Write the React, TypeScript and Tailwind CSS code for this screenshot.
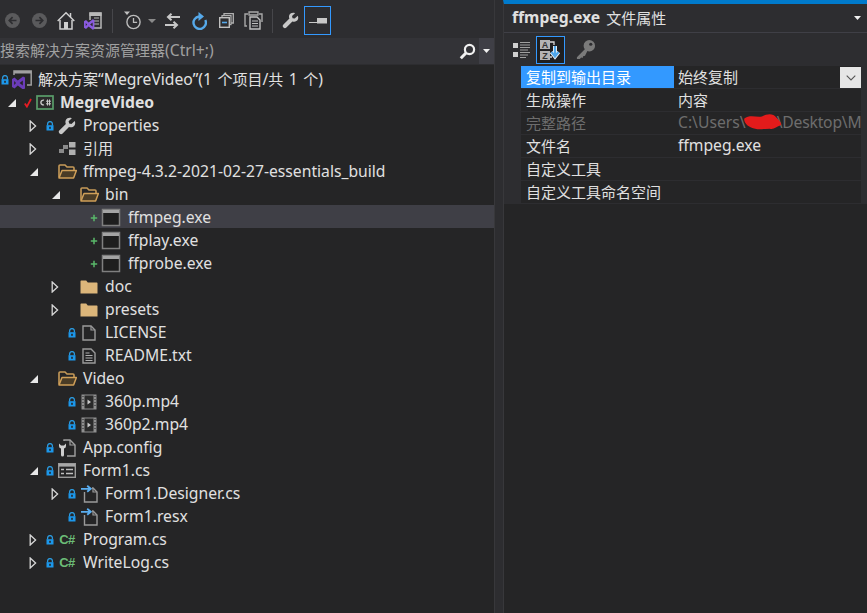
import React from "react";

const Lock = () => (
  <svg width="8" height="10" viewBox="0 0 8 10" className="block">
    <path d="M1.6 4.5V3a2.4 2.4 0 0 1 4.8 0v1.5" fill="none" stroke="#2b9be0" strokeWidth="1.3" />
    <rect x="0.5" y="4.2" width="7" height="5.3" fill="#1c97ea" />
    <rect x="3.2" y="5.8" width="1.6" height="2" fill="#252526" />
  </svg>
);

const Plus = () => (
  <svg width="8" height="8" viewBox="0 0 8 8" className="block">
    <path d="M4 .8v6.4M.8 4h6.4" stroke="#59b86a" strokeWidth="1.5" />
  </svg>
);

const Check = () => (
  <svg width="8" height="10" viewBox="0 0 8 10" className="block">
    <path d="M.8 5.5 2.9 8.6 7 1" fill="none" stroke="#e51c23" strokeWidth="1.8" />
  </svg>
);

const Open = () => (
  <svg width="10" height="10" viewBox="0 0 10 10" className="ml-[2px] block">
    <path d="M9 1v8H1z" fill="#e8e8e8" />
  </svg>
);

const Closed = () => (
  <svg width="8" height="12" viewBox="0 0 8 12" className="block">
    <path d="M1.2 1v10L6.6 6z" fill="#252526" stroke="#d8d8d8" strokeWidth="1.3" />
  </svg>
);

const Wrench = ({ size = 18, c = "#c8c8c8" }: { size?: number; c?: string }) => (
  <svg width={size} height={size} viewBox="0 0 19 19" className="block">
    <path
      d="M17.6 4.2 14.2 7.4 11.8 6.9 11.2 4.6 14.6 1.3C12.2.3 9.4 1 8.3 3.2 7.6 4.6 7.7 6.1 8.3 7.3L1.6 14a2.3 2.3 0 0 0 3.3 3.3l6.7-6.8c2.3 1 5 .2 6.1-2 .6-1.3.6-3 -.1-4.3z"
      fill={c}
    />
  </svg>
);

const FolderOpen = () => (
  <svg width="19" height="15" viewBox="0 0 19 15" className="block">
    <path d="M1 13.5V2a1 1 0 0 1 1-1h5l2 2h6a1 1 0 0 1 1 1v2" fill="none" stroke="#c69a58" strokeWidth="1.6" />
    <path d="M1 14 4 6.5h14.4L15.6 14z" fill="#4a3c26" stroke="#cf9f58" strokeWidth="1.5" strokeLinejoin="round" />
  </svg>
);

const FolderClosed = () => (
  <svg width="18" height="14" viewBox="0 0 18 14" className="block">
    <path d="M.5 13.5V1.2A.7.7 0 0 1 1.2.5h5l1.6 2h9a.7.7 0 0 1 .7.7v10.3z" fill="#dcb67a" />
  </svg>
);

const Exe = () => (
  <svg width="20" height="19" viewBox="0 0 20 19" className="block">
    <rect x="1.5" y="1.5" width="17" height="16" fill="#1e1e1e" stroke="#7f7f7f" strokeWidth="1.5" />
    <rect x="2" y="2" width="16" height="3" fill="#a4a4a4" />
  </svg>
);

const FileBlank = () => (
  <svg width="14" height="16" viewBox="0 0 14 16" className="block">
    <path d="M1 1h8l4 4v10H1z" fill="none" stroke="#9a9a9a" strokeWidth="1.4" />
    <path d="M9 1v4h4" fill="none" stroke="#9a9a9a" strokeWidth="1.2" />
  </svg>
);

const FileText = () => (
  <svg width="14" height="16" viewBox="0 0 14 16" className="block">
    <path d="M1 1h8l4 4v10H1z" fill="none" stroke="#9a9a9a" strokeWidth="1.4" />
    <path d="M3.5 5h4M3.5 7.5h7M3.5 10h7M3.5 12.5h7" stroke="#b0b0b0" strokeWidth="1.1" />
  </svg>
);

const Film = () => (
  <svg width="16" height="16" viewBox="0 0 16 16" className="block">
    <rect x=".5" y=".5" width="15" height="15" fill="#8f8f8f" />
    <rect x="3.5" y="1.5" width="9" height="13" fill="#2a2a2a" />
    <path d="M1.5 2.5h1M1.5 5.5h1M1.5 8.5h1M1.5 11.5h1M13.5 2.5h1M13.5 5.5h1M13.5 8.5h1M13.5 11.5h1" stroke="#252526" strokeWidth="1.2" />
    <path d="M6.5 5.5v5L10 8z" fill="#c8c8c8" />
  </svg>
);

const Config = () => (
  <svg width="18" height="18" viewBox="0 0 18 18" className="block">
    <path d="M6 2V1h6l5 5v11H9" fill="none" stroke="#a0a0a0" strokeWidth="1.4" />
    <path d="M12 1v5h5" fill="none" stroke="#a0a0a0" strokeWidth="1.2" />
    <path d="M1 4.5V7a2.6 2.6 0 0 0 2 2.5V16a1.5 1.5 0 0 0 3 0V9.5A2.6 2.6 0 0 0 8 7V4.5L6 6.5H3z" fill="#d0d0d0" />
  </svg>
);

const FormIcon = () => (
  <svg width="18" height="15" viewBox="0 0 18 15" className="block">
    <rect x=".7" y=".7" width="16.6" height="13.6" fill="#252526" stroke="#9a9a9a" strokeWidth="1.4" />
    <rect x="1" y="1" width="16" height="2.6" fill="#a8a8a8" />
    <path d="M3 6.5h3M8 6.5h7M3 10.5h3M8 10.5h7" stroke="#c0c0c0" strokeWidth="1.6" />
  </svg>
);

const Dep = () => (
  <svg width="17" height="18" viewBox="0 0 17 18" className="block">
    <path d="M3.5 7V17h12.5V7l-4-4h-1" fill="none" stroke="#9a9a9a" strokeWidth="1.4" />
    <path d="M12 3v4h4" fill="none" stroke="#9a9a9a" strokeWidth="1.2" />
    <path d="M0 3.8h9.5M6.2.8l3.6 3-3.6 3" fill="none" stroke="#5aaef0" strokeWidth="1.8" />
  </svg>
);

const CSharp = () => (
  <span className="font-['Liberation_Sans',sans-serif] text-[13px] leading-none font-bold tracking-[-0.5px] text-[#6cbd77]">
    C#
  </span>
);

const Project = () => (
  <svg width="18" height="15" viewBox="0 0 18 15" className="block">
    <rect x="1" y="1" width="16" height="13" fill="#2b2b2b" stroke="#5a9e6a" strokeWidth="1.7" />
    <path d="M8 5.2a2.4 2.4 0 1 0 0 4.6" fill="none" stroke="#c8c8c8" strokeWidth="1.4" />
    <path d="M10 6.2h5M10 8.8h5M11.5 4.5v6M13.5 4.5v6" stroke="#c8c8c8" strokeWidth="1" />
  </svg>
);

const Refs = () => (
  <svg width="17" height="13" viewBox="0 0 17 13" className="block">
    <rect x="10" y="0" width="6.5" height="5.5" fill="#b0b0b0" />
    <rect x="10" y="7.5" width="6.5" height="5.5" fill="#b0b0b0" />
    <rect x="4" y="3" width="5" height="4" fill="#8a8a8a" />
    <rect x="0" y="7" width="5" height="4" fill="#8a8a8a" />
  </svg>
);

const VsMark = ({ c = "#7a4ed1" }: { c?: string }) => (
  <path d="M0 3.5 2.5 2l3.3 3L11 1l2 1v11l-2 1-5.2-4-3.3 3L0 11.5zM2.2 5.5v4L4 7.5zM7.6 7.5 10.8 10V5z" fill={c} fillRule="evenodd" />
);

const Solution = () => (
  <svg width="20" height="19" viewBox="0 0 20 19" className="block">
    <path d="M2 5V1h17.2v14H15" fill="none" stroke="#a0a0a0" strokeWidth="1.5" />
    <path d="M2 1h17.2v2.5H2z" fill="#a0a0a0" />
    <g transform="translate(0 5.5)">
      <VsMark c="#6a3cb8" />
    </g>
  </svg>
);

type Row = {
  label: string;
  depth: string;
  gap: string;
  arrow?: "open" | "closed";
  state?: "lock" | "plus" | "check";
  icon: React.ReactNode;
  bold?: boolean;
  active?: boolean;
  zh?: boolean;
};

const rows: Row[] = [
  { label: "MegreVideo", depth: "pl-0", gap: "ml-[5px]", arrow: "open", state: "check", icon: <Project />, bold: true },
  { label: "Properties", depth: "pl-[22px]", gap: "ml-[6px]", arrow: "closed", state: "lock", icon: <Wrench /> },
  { label: "引用", depth: "pl-[22px]", gap: "ml-[6px]", arrow: "closed", icon: <Refs />, zh: true },
  { label: "ffmpeg-4.3.2-2021-02-27-essentials_build", depth: "pl-[22px]", gap: "ml-[6px]", arrow: "open", icon: <FolderOpen /> },
  { label: "bin", depth: "pl-[44px]", gap: "ml-[6px]", arrow: "open", icon: <FolderOpen /> },
  { label: "ffmpeg.exe", depth: "pl-[66px]", gap: "ml-[7px]", state: "plus", icon: <Exe />, active: true },
  { label: "ffplay.exe", depth: "pl-[66px]", gap: "ml-[7px]", state: "plus", icon: <Exe /> },
  { label: "ffprobe.exe", depth: "pl-[66px]", gap: "ml-[7px]", state: "plus", icon: <Exe /> },
  { label: "doc", depth: "pl-[44px]", gap: "ml-[6px]", arrow: "closed", icon: <FolderClosed /> },
  { label: "presets", depth: "pl-[44px]", gap: "ml-[6px]", arrow: "closed", icon: <FolderClosed /> },
  { label: "LICENSE", depth: "pl-[44px]", gap: "ml-[6px]", state: "lock", icon: <FileBlank /> },
  { label: "README.txt", depth: "pl-[44px]", gap: "ml-[6px]", state: "lock", icon: <FileText /> },
  { label: "Video", depth: "pl-[22px]", gap: "ml-[6px]", arrow: "open", icon: <FolderOpen /> },
  { label: "360p.mp4", depth: "pl-[44px]", gap: "ml-[6px]", state: "lock", icon: <Film /> },
  { label: "360p2.mp4", depth: "pl-[44px]", gap: "ml-[6px]", state: "lock", icon: <Film /> },
  { label: "App.config", depth: "pl-[22px]", gap: "ml-[6px]", state: "lock", icon: <Config /> },
  { label: "Form1.cs", depth: "pl-[22px]", gap: "ml-[6px]", arrow: "open", state: "lock", icon: <FormIcon /> },
  { label: "Form1.Designer.cs", depth: "pl-[44px]", gap: "ml-[6px]", arrow: "closed", state: "lock", icon: <Dep /> },
  { label: "Form1.resx", depth: "pl-[44px]", gap: "ml-[6px]", state: "lock", icon: <Dep /> },
  { label: "Program.cs", depth: "pl-[22px]", gap: "ml-[6px]", arrow: "closed", state: "lock", icon: <CSharp /> },
  { label: "WriteLog.cs", depth: "pl-[22px]", gap: "ml-[6px]", arrow: "closed", state: "lock", icon: <CSharp /> },
];

function TreeRow({ r }: { r: Row }) {
  return (
    <div className={`flex h-[23px] items-center pt-[2px] ${r.depth} ${r.active ? "bg-[#3f3f46]" : ""}`}>
      <span className="flex h-full w-[22px] shrink-0 items-center justify-center">
        {r.arrow === "open" ? <Open /> : r.arrow === "closed" ? <Closed /> : null}
      </span>
      <span className="flex h-full w-[13px] shrink-0 items-center justify-start pl-[2px]">
        {r.state === "lock" ? <Lock /> : r.state === "plus" ? <Plus /> : r.state === "check" ? <Check /> : null}
      </span>
      <span className="flex h-full w-[20px] shrink-0 items-center justify-center">{r.icon}</span>
      <span className={`whitespace-nowrap ${r.gap} ${r.bold ? "font-bold" : ""} ${r.zh ? "text-[15px]" : ""}`}>{r.label}</span>
    </div>
  );
}

const Zh = ({ children }: { children: React.ReactNode }) => <span className="text-[15px]">{children}</span>;

const props = [
  { k: "复制到输出目录", v: "始终复制", selected: true },
  { k: "生成操作", v: "内容" },
  { k: "完整路径", v: "C:\\Users\\", dim: true },
  { k: "文件名", v: "ffmpeg.exe" },
  { k: "自定义工具", v: "" },
  { k: "自定义工具命名空间", v: "" },
];

function ToolbarIcons() {
  return (
    <div className="flex h-[38px] shrink-0 items-center bg-[#2d2d30] pt-[3px] pl-[5px]">
      <svg width="15" height="15" viewBox="0 0 15 15" className="mr-[12px] block">
        <circle cx="7.5" cy="7.5" r="7.5" fill="#5a5a5c" />
        <path d="M11.5 7.5H5M7.6 4.2 4.3 7.5l3.3 3.3" fill="none" stroke="#2d2d30" strokeWidth="1.7" />
      </svg>
      <svg width="15" height="15" viewBox="0 0 15 15" className="mr-[10px] block">
        <circle cx="7.5" cy="7.5" r="7.5" fill="#5a5a5c" />
        <path d="M3.5 7.5H10M7.4 4.2l3.3 3.3-3.3 3.3" fill="none" stroke="#2d2d30" strokeWidth="1.7" />
      </svg>
      <svg width="18" height="19" viewBox="0 0 18 19" className="mr-[9px] block">
        <path d="M.7 10 9 1.8 17.3 10" fill="none" stroke="#d0d0d0" strokeWidth="1.5" />
        <path d="M13.5 2v4" stroke="#d0d0d0" strokeWidth="1.5" />
        <path d="M3 9v9h12V9" fill="none" stroke="#d0d0d0" strokeWidth="1.5" />
        <rect x="7" y="11" width="4" height="7" fill="#d0d0d0" />
      </svg>
      <svg width="18" height="18" viewBox="0 0 18 18" className="mr-[10px] block">
        <path d="M6 8V1h11v15H9" fill="#2d2d30" stroke="#b8b8b8" strokeWidth="1.5" />
        <path d="M6 1h11v2.5H6zM10 6h5M10 9h5M10 12h5" fill="#b8b8b8" stroke="#b8b8b8" strokeWidth="1.1" />
        <g transform="translate(0 6.5) scale(.8)">
          <VsMark c="#8a5ae0" />
        </g>
      </svg>
      <span className="mr-[11px] h-[24px] w-px bg-[#46464a]" />
      <svg width="18" height="19" viewBox="0 0 18 19" className="mr-[6px] block">
        <path d="M0 .5h6L3 4z" fill="#c0c0c0" />
        <circle cx="9.5" cy="11" r="6.6" fill="none" stroke="#bcbcbc" strokeWidth="1.4" />
        <path d="M9.5 7v4.3h3.6" fill="none" stroke="#bcbcbc" strokeWidth="1.3" />
      </svg>
      <svg width="8" height="4" viewBox="0 0 8 4" className="mr-[9px] block">
        <path d="M0 0h8L4 4z" fill="#8a8a8a" />
      </svg>
      <svg width="15" height="16" viewBox="0 0 15 16" className="mr-[12px] block">
        <path d="M15 4H3M6.5 .8 3 4l3.5 3.2M0 12h12M8.5 8.8 12 12l-3.5 3.2" fill="none" stroke="#c8c8c8" strokeWidth="2" />
      </svg>
      <svg width="15" height="18" viewBox="0 0 15 18" className="mr-[12px] block">
        <path d="M7 4.5A6.2 6.2 0 1 0 13.3 8" fill="none" stroke="#56a9ea" strokeWidth="2.4" />
        <path d="M6.5 0v9L12 4.5z" fill="#56a9ea" />
      </svg>
      <svg width="15" height="15" viewBox="0 0 15 15" className="mr-[10px] block">
        <path d="M5 3V.7h9.3V10H12" fill="none" stroke="#b0b0b0" strokeWidth="1.3" />
        <rect x="3" y="2.6" width="9" height="9" fill="#2d2d30" stroke="#b0b0b0" strokeWidth="1.2" />
        <rect x=".7" y="4.7" width="9.6" height="9.6" fill="#2d2d30" stroke="#c0c0c0" strokeWidth="1.4" />
        <path d="M3 9.5h5" stroke="#56a9ea" strokeWidth="1.6" />
      </svg>
      <svg width="19" height="19" viewBox="0 0 19 19" className="mr-[9px] block">
        <path d="M3 15H1V3h3M15 3h3v8" fill="none" stroke="#a8a8a8" strokeWidth="1.4" />
        <path d="M5 1h9v3H5z" fill="none" stroke="#a8a8a8" strokeWidth="1.3" />
        <path d="M6 6h7l3 3v9H6z" fill="#2d2d30" stroke="#c0c0c0" strokeWidth="1.4" />
        <path d="M8 10h6M8 12.5h6M8 15h6" stroke="#c0c0c0" strokeWidth="1.2" />
      </svg>
      <span className="mr-[9px] h-[24px] w-px bg-[#46464a]" />
      <span className="mr-[5px] block">
        <Wrench size={17} />
      </span>
      <span className="flex h-[29px] w-[27px] items-center justify-center border border-[#3399ff]">
        <svg width="18" height="6" viewBox="0 0 18 6" className="block">
          <path d="M0 4.5h8" stroke="#c8c8c8" strokeWidth="1" />
          <rect x="8" y="0" width="10" height="5.5" fill="#c8c8c8" />
        </svg>
      </span>
    </div>
  );
}

export default function App() {
  return (
    <div className="flex h-[613px] w-[867px] overflow-hidden bg-[#2d2d30] font-['Noto_Sans','Noto_Sans_CJK_SC',sans-serif] text-[15.7px] text-[#e0e0e0]">
      <div className="flex w-[495px] shrink-0 flex-col border-r border-[#38383b] bg-[#252526]">
        <ToolbarIcons />
        <div className="flex h-[27px] shrink-0 items-center justify-between border-b border-[#2d2d30] bg-[#333337] text-[#a0a0a0]">
          <span className="whitespace-nowrap">
            <Zh>搜索解决方案资源管理器</Zh>(Ctrl+;)
          </span>
          <span className="flex h-full items-center">
            <svg width="17" height="17" viewBox="0 0 17 17" className="mr-[3px] block">
              <circle cx="10.5" cy="6.5" r="4.6" fill="none" stroke="#f0f0f0" strokeWidth="2.2" />
              <path d="M7 10 1.8 15.2" stroke="#f0f0f0" strokeWidth="3" />
            </svg>
            <span className="flex h-full w-[15px] items-center justify-center bg-[#3f3f46]">
              <svg width="7" height="4" viewBox="0 0 7 4" className="block">
                <path d="M0 0h7L3.5 4z" fill="#f0f0f0" />
              </svg>
            </span>
          </span>
        </div>
        <div className="flex h-[2px] shrink-0" />
        <div className="flex h-[23px] items-center pt-[2px]">
          <span className="flex h-full w-[12px] shrink-0 items-center pl-px">
            <Lock />
          </span>
          <span className="flex h-full w-[22px] shrink-0 items-center">
            <Solution />
          </span>
          <span className="ml-[4px] whitespace-nowrap [word-spacing:1.4px]">
            <Zh>解决方案</Zh>“MegreVideo”(1 <Zh>个项目</Zh>/<Zh>共</Zh> 1 <Zh>个</Zh>)
          </span>
        </div>
        {rows.map((r) => (
          <TreeRow key={r.label} r={r} />
        ))}
      </div>

      <div className="ml-[8px] flex min-w-0 flex-1 flex-col border-t-4 border-l border-t-[#007acc] border-l-[#38383b] bg-[#252526]">
        <div className="flex h-[28px] shrink-0 items-center justify-between bg-[#2d2d30] pr-[6px] pl-[8px]">
          <span className="flex items-center gap-[6px] whitespace-nowrap">
            <span className="font-bold">ffmpeg.exe</span>
            <Zh>文件属性</Zh>
          </span>
          <svg width="7" height="4" viewBox="0 0 7 4" className="block">
            <path d="M0 0h7L3.5 4z" fill="#f0f0f0" />
          </svg>
        </div>
        <div className="flex h-[34px] shrink-0 items-center border-t border-[#3f3f46] bg-[#2d2d30] pl-[9px]">
          <svg width="17" height="16" viewBox="0 0 17 16" className="mr-[6px] block">
            <rect x="0" y="1" width="5" height="5" fill="#d0d0d0" />
            <rect x="0" y="10" width="5" height="5" fill="#d0d0d0" />
            <path d="M7 .5h10M7 3h10M7 5.5h10M7 8h8M7 10.5h10M7 13h8M7 15.5h6" stroke="#a0a0a0" strokeWidth="1" />
          </svg>
          <span className="mr-[10px] flex h-[28px] w-[29px] items-center justify-center border border-[#3399ff] bg-[#1f1f20]">
            <svg width="23" height="22" viewBox="0 0 23 22" className="block">
              <rect x="1" y="1" width="10" height="9" fill="#b4b4b4" />
              <rect x="1" y="12" width="10" height="9" fill="#b4b4b4" />
              <text x="6" y="8.8" textAnchor="middle" fontSize="9" fontWeight="700" fill="#333" fontFamily="'Liberation Sans',sans-serif">A</text>
              <text x="6" y="19.8" textAnchor="middle" fontSize="9" fontWeight="700" fill="#333" fontFamily="'Liberation Sans',sans-serif">Z</text>
              <path d="M11 3h4v3M11 18h2" fill="none" stroke="#d8d8d8" strokeWidth="1.3" />
              <path d="M16 7v9M12.5 13l3.5 4.5 3.5-4.5" fill="none" stroke="#f0f0f0" strokeWidth="4" />
              <path d="M16 7v9M12.5 13l3.5 4.5 3.5-4.5" fill="none" stroke="#4ea6ea" strokeWidth="2.2" />
            </svg>
          </span>
          <svg width="21" height="21" viewBox="0 0 22 22" className="block">
            <circle cx="15" cy="7" r="6" fill="#7a7a7a" />
            <path d="M11 10 2 19v2h3l1.5-1.5 1.5.5.5-2 2-.5 3-6z" fill="#7a7a7a" />
            <circle cx="16.5" cy="5.5" r="1.7" fill="#2d2d30" />
          </svg>
        </div>
        <div className="flex shrink-0 flex-col bg-[#2d2d30] pr-[6px] pl-[17px]">
          {props.map((p) => (
            <div key={p.k} className="flex h-[23px] border-b border-[#2d2d30] bg-[#252526]">
              <span
                className={`flex w-[153px] shrink-0 items-center pl-[5px] text-[15px] whitespace-nowrap ${
                  p.selected ? "bg-[#3399ff] text-white" : p.dim ? "text-[#6d6d6d]" : ""
                }`}
              >
                {p.k}
              </span>
              <span
                className={`relative ml-px flex min-w-0 flex-1 items-center overflow-hidden pl-[3px] whitespace-nowrap ${
                  p.dim ? "text-[#6d6d6d]" : ""
                } ${p.selected || p.k === "生成操作" ? "text-[15px]" : ""}`}
              >
                {p.dim ? (
                  <>
                    <span className="shrink-0">C:\Users\</span>
                    <span className="w-[31px] shrink-0" />
                    <span className="shrink-0 tracking-[-0.2px]">\Desktop\M</span>
                    <svg width="40" height="18" viewBox="0 0 36 16" className="absolute top-[1px] left-[68px] block">
                      <path d="M1 5C6 1 12 4 17 3 22 .5 27 0 30 4c3 3 5 5 4 7-4 1-6 4-10 3-5 0-9 1-13 0C6 13 1 10 1 5z" fill="#e31b1b" />
                    </svg>
                  </>
                ) : (
                  p.v
                )}
                {p.selected ? (
                  <span className="absolute top-[1px] right-0 flex h-[21px] w-[21px] items-center justify-center bg-[#e6e6e6]">
                    <svg width="10" height="6" viewBox="0 0 10 6" className="block">
                      <path d="M.7.7 5 5 9.3.7" fill="none" stroke="#555" strokeWidth="1.1" />
                    </svg>
                  </span>
                ) : null}
              </span>
            </div>
          ))}
        </div>
      </div>
    </div>
  );
}
